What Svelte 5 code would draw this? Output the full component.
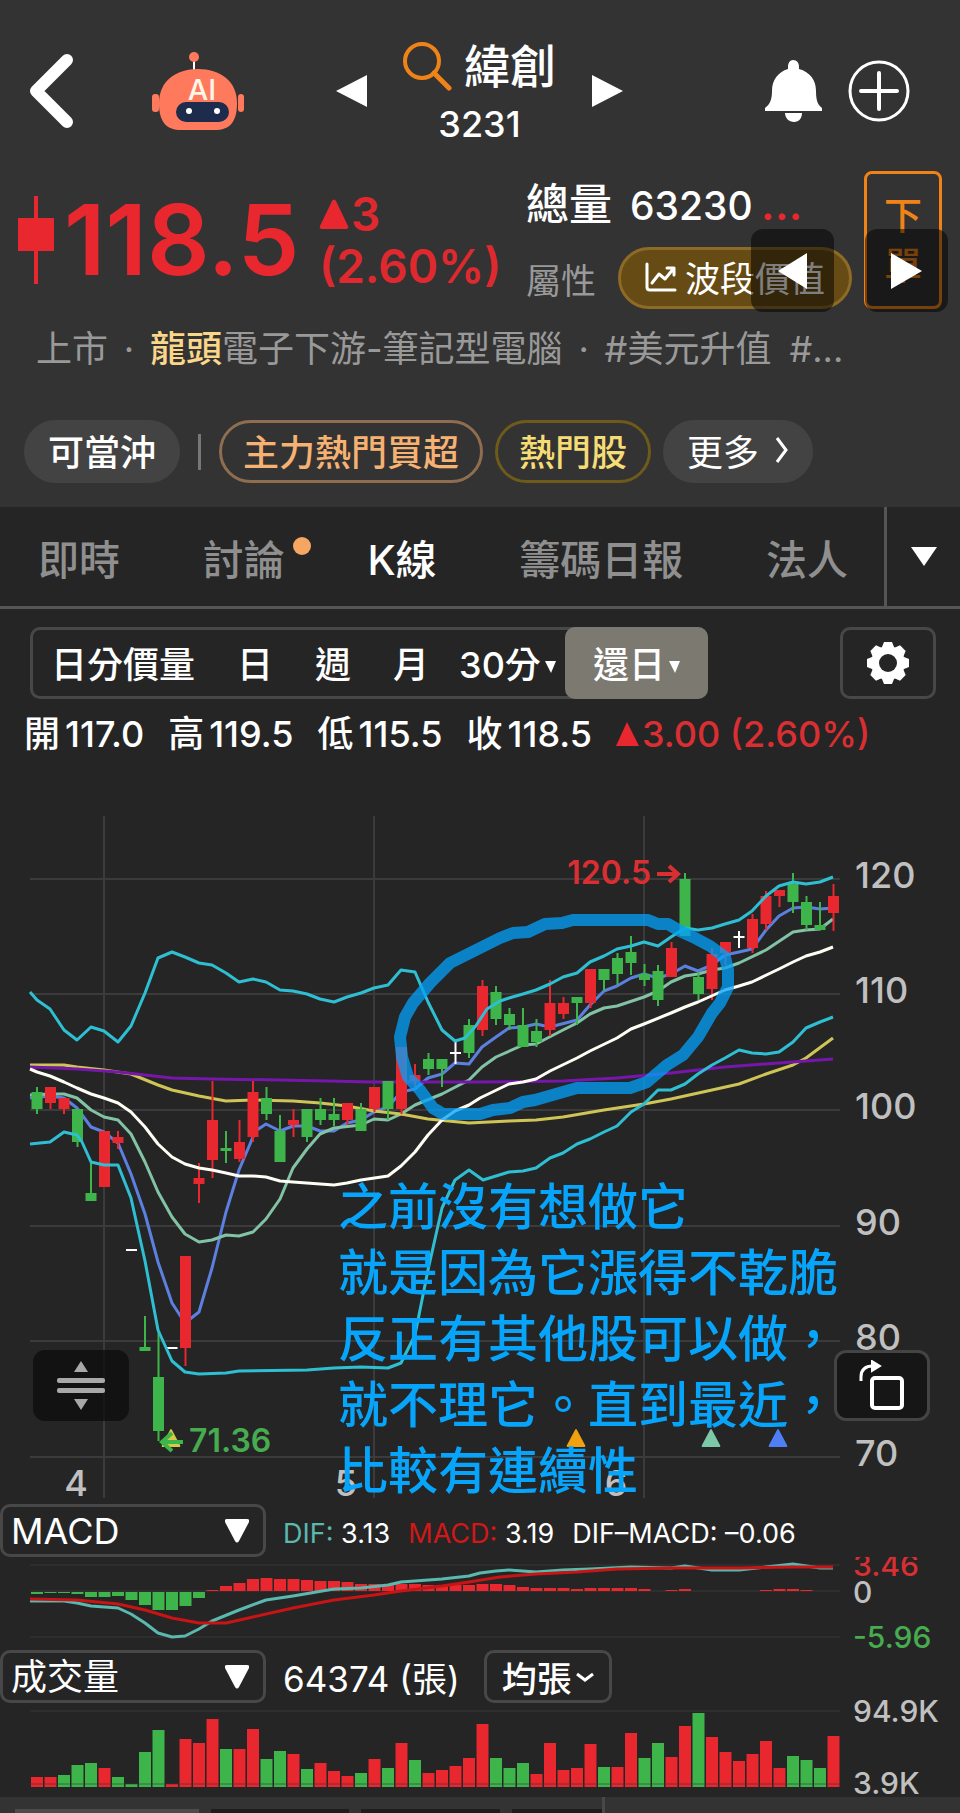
<script lang="ts">
  type Candle = [string, number, number, number, number];

  const X0 = 37;
  const STEP = 13.5;
  const colors: Record<string, string> = { r: '#e8272f', g: '#3db54a', w: '#ffffff' };

  // colour, high, body top, body bottom, low (chart units)
  const candles: Candle[] = [
    ['g', 307, 312, 329, 334], ['r', 307, 307, 323, 329], ['r', 318, 318, 329, 334], ['g', 329, 329, 362, 367],
    ['g', 382, 413, 421, 421], ['r', 351, 351, 407, 407], ['r', 351, 357, 363, 369], ['w', 469, 469, 471, 471],
    ['g', 536, 567, 571, 571], ['g', 552, 597, 651, 661], ['w', 567, 567, 569, 569], ['r', 476, 476, 568, 586],
    ['r', 383, 398, 404, 423], ['r', 301, 340, 380, 398], ['g', 351, 368, 371, 383], ['r', 340, 362, 379, 382],
    ['r', 301, 312, 357, 362], ['g', 307, 318, 334, 340], ['g', 335, 351, 382, 382], ['r', 329, 340, 345, 357],
    ['g', 329, 329, 357, 362], ['g', 318, 329, 340, 345], ['g', 318, 334, 340, 346], ['r', 323, 323, 340, 345],
    ['g', 323, 329, 351, 351], ['r', 307, 307, 329, 332], ['g', 301, 301, 329, 340], ['r', 267, 267, 329, 334],
    ['r', 284, 295, 301, 307], ['g', 273, 279, 289, 295], ['g', 279, 279, 289, 307], ['w', 262, 272, 274, 284],
    ['g', 239, 245, 273, 278], ['r', 200, 206, 250, 256], ['g', 206, 212, 239, 245], ['g', 228, 234, 245, 250],
    ['g', 228, 245, 267, 267], ['g', 239, 251, 262, 267], ['r', 200, 223, 250, 256], ['r', 217, 223, 234, 239],
    ['g', 217, 217, 223, 245], ['r', 189, 189, 223, 228], ['g', 189, 189, 200, 211], ['g', 173, 178, 194, 205],
    ['g', 156, 172, 183, 195], ['g', 184, 194, 200, 206], ['g', 185, 191, 220, 226], ['r', 162, 168, 197, 197],
    ['g', 93, 99, 156, 156], ['g', 192, 197, 214, 220], ['r', 168, 174, 209, 220], ['r', 162, 162, 173, 185],
    ['w', 151, 156, 158, 168], ['r', 134, 139, 168, 173], ['r', 111, 116, 144, 150], ['r', 110, 110, 116, 127],
    ['g', 93, 104, 122, 133], ['g', 116, 122, 145, 150], ['g', 122, 145, 150, 150], ['r', 104, 116, 133, 151]
  ];

  const lines = [
    { color: '#5b80e0', points: '30,318 50,316 64,318 77,328 91,347 104,352 118,363 131,394 145,434 158,482 172,523 185,543 199,532 212,488 226,432 239,390 253,357 257,350 266,344 280,351 293,346 307,346 320,351 334,351 347,343 361,340 374,332 388,327 401,312 415,309 428,298 442,294 455,283 469,284 482,267 496,257 509,248 523,247 536,244 550,247 577,240 590,225 604,211 617,206 631,198 644,194 658,198 671,194 685,186 698,191 712,185 725,175 739,172 752,169 766,150 779,136 793,128 806,127 820,129 833,128' },
    { color: '#82c3a6', points: '30,315 50,314 64,314 77,318 91,330 104,337 118,340 131,354 145,382 158,412 172,437 185,454 199,462 212,460 226,455 239,456 253,452 266,439 280,419 293,388 307,369 320,354 334,348 361,345 374,339 388,340 401,334 415,325 442,314 469,300 482,287 496,277 523,265 536,264 563,250 577,243 590,234 604,228 617,226 644,217 658,211 671,202 685,196 698,194 712,190 725,188 739,183 766,170 793,152 806,150 820,149 833,139' },
    { color: '#cfc557', points: '30,285 64,285 77,287 104,290 131,294 158,305 172,310 199,316 226,321 253,320 293,321 320,323 347,326 374,331 401,334 428,339 469,343 509,341 536,340 563,337 604,330 644,324 671,319 712,310 739,304 766,294 793,285 806,278 833,258' },
    { color: '#7716ab', points: '30,287 77,289 118,292 145,295 172,298 212,299 280,300 374,302 480,302 563,301 617,298 671,293 725,287 779,283 833,279' },
    { color: '#2fbfd3', points: '30,212 37,220 50,229 64,250 77,260 91,247 104,251 118,262 131,246 145,213 158,178 172,172 185,177 199,183 212,185 226,193 239,202 253,199 266,202 280,210 293,211 307,214 320,219 334,222 347,217 361,213 374,208 388,205 401,190 415,192 428,222 442,250 455,261 465,258 475,247 487,229 500,221 509,218 523,214 536,210 550,204 563,197 577,193 590,182 604,176 617,169 631,166 644,162 658,166 671,157 685,148 698,150 712,148 725,144 739,140 752,131 766,116 779,106 793,102 806,104 820,102 833,97' },
    { color: '#2fbfd3', points: '30,364 50,362 64,352 77,355 82,362 91,382 104,385 118,385 131,418 145,481 158,550 172,581 185,592 199,594 226,593 239,591 307,590 334,588 361,587 388,588 401,583 415,555 428,490 442,428 455,400 469,390 483,400 509,392 523,391 536,388 550,378 563,373 577,364 590,359 604,352 617,346 631,332 644,324 658,310 671,310 685,304 698,294 712,285 725,278 739,270 752,273 766,274 779,272 793,262 806,248 820,242 833,237' },
    { color: '#fffef5', points: '30,289 37,292 50,296 64,302 77,308 91,314 104,318 118,323 131,332 145,347 158,364 172,377 185,384 199,388 212,390 226,393 239,396 253,396 266,397 280,401 293,402 334,405 347,403 361,400 388,396 401,386 415,372 428,355 442,340 455,331 469,325 480,318 509,304 523,302 536,299 550,291 577,278 590,271 617,258 631,249 644,244 671,233 685,227 698,222 725,210 739,206 752,202 779,189 793,182 806,176 820,172 833,167' }
  ];

  const priceAxis = [
    { label: '120', y: 99 }, { label: '110', y: 214 }, { label: '100', y: 330 },
    { label: '90', y: 446 }, { label: '80', y: 561 }, { label: '70', y: 677 }
  ];
  const months = [
    { label: '4', x: 104 }, { label: '5', x: 374 }, { label: '6', x: 644 }
  ];
  const events = [
    { x: 171, color: '#d3cb45' }, { x: 576, color: '#f0a010' },
    { x: 711, color: '#7cc9a8' }, { x: 778, color: '#4f7ff5' }
  ];
  const note = ['之前沒有想做它', '就是因為它漲得不乾脆', '反正有其他股可以做，', '就不理它。直到最近，', '比較有連續性'];

  const histogram = [
    -2, -1, -1, -2, -5, -5, -4, -8, -13, -18, -18, -14, -6, 1, 5, 8, 12, 13, 12, 12,
    11, 10, 10, 9, 7, 7, 6, 7, 7, 6, 6, 6, 6, 7, 7, 6, 4, 3, 3, 3,
    2, 3, 3, 3, 3, 2, 0, 1, 2, 0, 0, 0, 0, 0, 1, 2, 2, 1, 0, 0
  ];
  const volume = [
    10, 10, 12, 22, 24, 19, 10, 3, 35, 57, 3, 48, 44, 68, 38, 38, 58, 28, 36, 33,
    18, 24, 16, 11, 14, 28, 19, 44, 27, 14, 17, 21, 29, 63, 29, 19, 24, 13, 44, 17,
    19, 43, 20, 20, 54, 29, 44, 30, 61, 74, 50, 35, 26, 33, 46, 19, 31, 27, 19, 51
  ];
  const volumeColors = 'rrgggrggggrrrrgrrggrgrrrgrgrgrrrrrgggrrrrrgrrggrrgrrrrrrgggr';

  const tabs = [
    { label: '即時' }, { label: '討論', dot: true }, { label: 'K線' }, { label: '籌碼日報' }, { label: '法人' }
  ];
  let activeTab = 'K線';

  const periods = [
    { label: '日分價量' }, { label: '日' }, { label: '週' }, { label: '月' },
    { label: '30分', menu: true }, { label: '還日', menu: true }
  ];
  let activePeriod = '還日';

  const ohlc = [['開', '117.0'], ['高', '119.5'], ['低', '115.5'], ['收', '118.5']];
</script>

<div class="app">
  <header>
    <div class="bar">
      <div class="bar-left">
        <button aria-label="返回">
          <svg width="44" height="76" viewBox="0 0 44 76"><path d="M38 7 7 38l31 31" fill="none" stroke="#fff" stroke-width="12" stroke-linecap="round" stroke-linejoin="round" /></svg>
        </button>
        <button aria-label="AI 助理">
          <svg width="92" height="80" viewBox="0 0 92 80">
            <path d="M42 8v12" stroke="#fff" stroke-width="2" />
            <circle cx="42" cy="6" r="5" fill="#ff7a5c" />
            <rect x="0" y="43" width="7" height="18" rx="3" fill="#ff7a5c" />
            <rect x="86" y="43" width="6" height="18" rx="3" fill="#ff7a5c" />
            <path d="M7 52C7 30 24 18 46 18s39 12 39 34c0 20-8 27-22 27H29C15 79 7 72 7 52z" fill="#ff7a5c" />
            <rect x="24" y="51" width="53" height="20" rx="10" fill="#1d2b4c" />
            <circle cx="37" cy="60" r="3" fill="#fff" />
            <circle cx="65" cy="60" r="3" fill="#fff" />
            <text x="50" y="49" text-anchor="middle" font-size="29" font-weight="500" fill="#fff6e8">AI</text>
          </svg>
        </button>
      </div>
      <div class="stock">
        <button aria-label="上一檔"><svg width="31" height="32" viewBox="0 0 31 32"><path d="M31 0v32L0 16z" fill="#fff" /></svg></button>
        <div class="title">
          <h1>
            <svg width="49" height="49" viewBox="0 0 49 49" fill="none" stroke="#ef8318"><circle cx="19" cy="19" r="17" stroke-width="4" /><path d="M31 31 46 46" stroke-width="5" stroke-linecap="round" /></svg>
            緯創
          </h1>
          <span class="code">3231</span>
        </div>
        <button aria-label="下一檔"><svg width="31" height="32" viewBox="0 0 31 32"><path d="M0 0v32L31 16z" fill="#fff" /></svg></button>
      </div>
      <div class="bar-right">
        <button aria-label="通知">
          <svg width="57" height="62" viewBox="0 0 57 62" fill="#fff">
            <path d="M28 0c4 0 6 3 6 7v2c11 3 17 11 17 22 0 10 2 14 6 17v3H0v-3c4-3 7-7 7-17C7 20 13 12 23 9V7c0-4 2-7 5-7z" />
            <path d="M20 53h17c0 5-3 9-8 9s-9-4-9-9z" />
          </svg>
        </button>
        <button aria-label="加入自選">
          <svg width="62" height="62" viewBox="0 0 62 62" fill="none" stroke="#fff"><circle cx="31" cy="31" r="29" stroke-width="3" /><path d="M13 31h36M31 13v36" stroke-width="4" stroke-linecap="round" /></svg>
        </button>
      </div>
    </div>

    <div class="quote">
      <svg width="36" height="88" viewBox="0 0 36 88" fill="#e8272f"><path d="M16 0h4v88h-4zM0 22h36v33H0z" /></svg>
      <strong class="price">118.5</strong>
      <div class="change">
        <span><svg width="30" height="30" viewBox="0 0 30 30"><path d="M13 2q2-3 4 0l12 25q1 3-2 3H3q-3 0-2-3z" fill="#e8272f" /></svg>3</span>
        <span>(2.60%)</span>
      </div>
      <div class="info">
        <div class="total"><span class="big">總量</span><span>63230<i>...</i></span></div>
        <div class="kind">
          <span>屬性</span>
          <button class="style-pill">
            <svg width="32" height="32" viewBox="0 0 32 32" fill="none" stroke="#fff" stroke-width="3" stroke-linecap="round" stroke-linejoin="round"><path d="M2 3v23q0 3 3 3h25M7 22l7-9 6 5 9-11M22 7h7v7" /></svg>
            波段價值
          </button>
        </div>
      </div>
      <button class="order">下單</button>
      <button class="float prev" aria-label="向左"><svg width="29" height="36" viewBox="0 0 29 36"><path d="M29 0v36L0 18z" fill="#fff" /></svg></button>
      <button class="float next" aria-label="向右"><svg width="31" height="36" viewBox="0 0 31 36"><path d="M0 0v36L31 18z" fill="#fff" /></svg></button>
    </div>

    <p class="tags">
      <span>上市</span><span class="sep">·</span><span><b>龍頭</b>電子下游-筆記型電腦</span><span class="sep">·</span><span>#美元升值</span><span class="last">#...</span>
    </p>

    <div class="chips">
      <button class="chip solid">可當沖</button>
      <i class="rule"></i>
      <button class="chip orange">主力熱門買超</button>
      <button class="chip yellow">熱門股</button>
      <button class="chip solid more">更多
        <svg width="14" height="28" viewBox="0 0 14 28"><path d="M2 2l9 12-9 12" fill="none" stroke="#fff" stroke-width="3" /></svg>
      </button>
    </div>
  </header>

  <nav>
    <div class="tabs">
      {#each tabs as tab}
        <button class="tab" class:active={activeTab === tab.label} on:click={() => (activeTab = tab.label)}>
          {tab.label}{#if tab.dot}<i class="dot"></i>{/if}
        </button>
      {/each}
    </div>
    <button class="all" aria-label="全部分頁"><svg width="26" height="19" viewBox="0 0 26 19"><path d="M0 0h26L13 19z" fill="#fff" /></svg></button>
  </nav>

  <div class="controls">
    <div class="periods">
      {#each periods as period}
        <button class:menu={period.menu} class:active={activePeriod === period.label} on:click={() => (activePeriod = period.label)}>
          {period.label}{#if period.menu}<svg width="11" height="12" viewBox="0 0 11 12"><path d="M0 0h11L6 12z" fill="#fff" /></svg>{/if}
        </button>
      {/each}
    </div>
    <button class="settings" aria-label="設定">
      <svg width="44" height="44" viewBox="-22 -22 44 44">
        {#each [0, 45, 90, 135] as angle}
          <path d="M-6-16-4-21H4L6-16V16L4 21H-4L-6 16z" fill="#fff" transform="rotate({angle})" />
        {/each}
        <circle r="17" fill="#fff" />
        <circle r="9" fill="#252525" />
      </svg>
    </button>
  </div>

  <div class="ohlc">
    {#each ohlc as [name, value]}
      <span>{name}<em>{value}</em></span>
    {/each}
    <span class="up"><svg width="23" height="24" viewBox="0 0 23 24"><path d="M11 0 23 24H0z" fill="#e8272f" /></svg>3.00 (2.60%)</span>
  </div>

  <div class="chart">
    <svg viewBox="0 0 960 720">
      <g stroke="#3b3b3b" stroke-width="2">
        {#each priceAxis as tick}<path d="M30 {tick.y}H840" />{/each}
        {#each months as month}<path d="M{month.x} 36V718" />{/each}
      </g>
      <g class="axis">
        {#each priceAxis as tick}<text x="855" y={tick.y + 9}>{tick.label}</text>{/each}
        {#each months as month}<text x={month.x - 28} y="716" text-anchor="middle">{month.label}</text>{/each}
      </g>
      <g fill="none" stroke-width="3" stroke-linejoin="round">
        {#each lines.slice(0, 4) as line}<polyline points={line.points} stroke={line.color} />{/each}
      </g>
      {#each candles as [color, high, top, bottom, low], i}
        <g fill={colors[color]}>
          <rect x={X0 + i * STEP - 1} y={high} width="2" height={low - high} />
          <rect x={X0 + i * STEP - 5.5} y={top} width="11" height={bottom - top} />
        </g>
      {/each}
      <g fill="none" stroke-width="3" stroke-linejoin="round">
        {#each lines.slice(4) as line}<polyline points={line.points} stroke={line.color} />{/each}
      </g>
      {#each events as event}
        <path d="M{event.x - 1} 650q1-2 2 0l8 15q1 2-1 2h-16q-2 0-1-2z" fill={event.color} />
      {/each}
      <g class="mark">
        <text x="651" y="104" text-anchor="end" fill="#d92f33">120.5</text>
        <path d="M657 94h20M669 86l9 8-9 8" stroke="#d92f33" />
        <text x="189" y="672" fill="#47ab50">71.36</text>
        <path d="M183 662h-20M172 653l-10 9 10 9" stroke="#3db54a" />
      </g>
      <path class="loop" d="M402 277 400 257 405 237 413 223 430 203 450 183 480 168 500 158 513 153 528 152 545 144 562 143 573 140H648L658 144H668L680 151 693 157 710 166 725 177 728 190V207L720 223 712 233 698 257 683 275 667 285 647 302 630 308H577L563 312 535 320 523 322 510 328 493 330 480 334H443L433 328 420 310 408 297z" />
      <g class="note">
        {#each note as row, i}<text x="338" y={445 + i * 66}>{row}</text>{/each}
      </g>
    </svg>
    <button class="resize" aria-label="調整高度">
      <svg width="48" height="49" viewBox="0 0 48 49" fill="#a8a8a8"><path d="M24 0 31 11H17zM24 49 31 38H17z" /><rect y="17" width="48" height="5" rx="2" /><rect y="27" width="48" height="5" rx="2" /></svg>
    </button>
    <button class="rotate" aria-label="旋轉畫面">
      <svg width="46" height="52" viewBox="0 0 46 52" fill="none" stroke="#fff"><rect x="13" y="18" width="30" height="30" rx="3" stroke-width="4" /><path d="M2 21v-4Q2 6 14 6" stroke-width="3" /><path d="M13 1 21 6 13 11z" fill="#fff" stroke-width="2" /></svg>
    </button>
  </div>

  <div class="indicator">
    <label class="picker">
      <select aria-label="副圖指標"><option>MACD</option><option>KD</option></select>
      <svg width="24" height="24" viewBox="0 0 24 24"><path d="M2 0h20q3 0 2 3L14 22q-2 3-4 0L0 3Q-1 0 2 0z" fill="#fff" /></svg>
    </label>
    <div class="values">
      <span><i class="dif">DIF:</i> 3.13</span><span><i class="macd">MACD:</i> 3.19</span><span>DIF–MACD: –0.06</span>
    </div>
  </div>
  <svg class="sub macd-chart" viewBox="0 0 960 93">
    <path d="M30 8H840M30 34H840M30 80H840" stroke="#383838" />
    {#each histogram as value, i}
      <rect x={X0 + i * STEP - 6} y={value > 0 ? 34 - value : 35} width="12" height={Math.abs(value)} fill={value > 0 ? colors.r : colors.g} />
    {/each}
    <g fill="none" stroke-width="3" stroke-linejoin="round">
      <polyline stroke="#5bb8ae" points="30,44 64,44 77,46 91,49 118,51 131,57 145,66 158,76 172,80 185,79 199,72 212,64 239,53 266,43 293,39 334,32 361,31 388,28 401,25 442,22 469,19 480,16 496,14 509,13 536,15 563,13 590,12 631,10 671,11 685,9 712,13 739,13 766,10 793,7 820,11 833,11" />
      <polyline stroke="#c81414" points="30,42 77,43 118,47 145,53 172,61 199,66 226,66 253,60 293,51 334,43 374,38 401,34 442,29 469,25 500,20 536,17 577,15 617,12 671,11 739,11 793,10 833,10" />
    </g>
    <text x="853" y="19" fill="#d92f33">3.46</text>
    <text x="853" y="46" fill="#c0c0c0">0</text>
    <text x="853" y="91" fill="#47ab50">-5.96</text>
  </svg>

  <div class="indicator">
    <label class="picker">
      <select aria-label="成交量指標"><option>成交量</option><option>RSI</option></select>
      <svg width="24" height="24" viewBox="0 0 24 24"><path d="M2 0h20q3 0 2 3L14 22q-2 3-4 0L0 3Q-1 0 2 0z" fill="#fff" /></svg>
    </label>
    <span class="amount">64374 (張)</span>
    <button class="average">均張<svg width="18" height="10" viewBox="0 0 18 10"><path d="M1 2l8 6 8-6" fill="none" stroke="#fff" stroke-width="3" /></svg></button>
  </div>
  <svg class="sub" viewBox="0 0 960 94">
    <path d="M30 8H840" stroke="#383838" />
    {#each volume as value, i}
      <rect x={X0 + i * STEP - 6} y={84 - value} width="12" height={value} fill={colors[volumeColors[i]]} />
    {/each}
    <path d="M30 81H840" stroke="#383838" opacity="0.6" />
    <text x="853" y="19" fill="#c0c0c0">94.9K</text>
    <text x="853" y="91" fill="#c0c0c0">3.9K</text>
  </svg>

  <footer>
    <div class="strip"><i class="on"></i><i></i><i></i><i></i></div>
  </footer>
</div>

<style>
  :global(body) {
    background: #252525;
  }
  .app {
    background: #252525;
    color: #fff;
    font-family: Inter, "Noto Sans CJK TC", sans-serif;
    font-size: 36px;
    overflow: hidden;
  }
  button {
    display: flex;
    align-items: center;
    justify-content: center;
    padding: 0;
    border: none;
    background: none;
    color: inherit;
    font: inherit;
    white-space: nowrap;
    cursor: pointer;
  }
  svg {
    display: block;
    flex: none;
  }
  i, em {
    font-style: normal;
  }

  header {
    background: #333;
    padding: 38px 0 24px;
  }
  .bar {
    display: grid;
    grid-template-columns: 1fr auto 1fr;
    align-items: center;
    padding: 0 50px 0 29px;
  }
  .bar-left, .bar-right, .stock {
    display: flex;
    align-items: center;
  }
  .bar-left { gap: 79px; }
  .bar-right { justify-content: flex-end; gap: 26px; }
  .stock { gap: 36px; margin-left: 20px; }
  .title {
    display: flex;
    flex-direction: column;
    align-items: center;
    gap: 10px;
  }
  h1 {
    display: flex;
    align-items: center;
    gap: 12px;
    margin: 0;
    font-size: 46px;
    font-weight: 500;
    line-height: 56px;
  }
  .code {
    font-weight: 500;
    line-height: 40px;
  }

  .quote {
    position: relative;
    display: grid;
    grid-template-columns: 36px 265fr 207fr 338fr 78px;
    align-items: center;
    margin-top: 27px;
    padding: 0 18px;
  }
  .price {
    padding-left: 10px;
    color: #e8272f;
    font-size: 98px;
    font-weight: 600;
    line-height: 100px;
  }
  .change {
    color: #e0292f;
    font-size: 46px;
    font-weight: 600;
    line-height: 52px;
  }
  .change span {
    display: flex;
    align-items: center;
    gap: 2px;
  }
  .info {
    display: flex;
    flex-direction: column;
    gap: 10px;
  }
  .total {
    display: flex;
    align-items: center;
    gap: 18px;
    height: 66px;
    font-size: 39px;
    font-weight: 500;
    line-height: 60px;
  }
  .big { font-size: 43px; }
  .total i { margin-left: 8px; color: #e8272f; font-size: 46px; }
  .kind {
    display: flex;
    align-items: center;
    gap: 22px;
    color: #999;
    font-size: 35px;
  }
  .style-pill {
    gap: 8px;
    height: 62px;
    padding: 0 24px 3px;
    border: 3px solid #8d6b26;
    border-radius: 31px;
    background: #674b14;
    color: #fff;
  }
  .order {
    align-self: stretch;
    border: 3px solid #ef8318;
    border-radius: 8px;
    color: #ef8318;
    font-size: 38px;
    font-weight: 500;
    line-height: 50px;
    white-space: normal;
    padding: 0 18px;
  }
  .float {
    position: absolute;
    bottom: -3px;
    width: 83px;
    height: 83px;
    border-radius: 12px;
    background: rgba(0, 0, 0, 0.5);
  }
  .prev { right: 126px; }
  .next { right: 12px; }

  .tags {
    display: flex;
    margin: 20px 0 0;
    padding: 0 36px;
    color: #999;
    line-height: 40px;
    white-space: nowrap;
  }
  .tags b { color: #fbd78a; font-weight: 500; }
  .sep { width: 42px; text-align: center; }
  .last { margin-left: 18px; }

  .chips {
    display: flex;
    align-items: center;
    gap: 12px;
    margin-top: 51px;
    padding: 0 24px;
  }
  .chip {
    height: 63px;
    padding: 0 21px 3px;
    border: 3px solid transparent;
    border-radius: 32px;
    font-weight: 500;
  }
  .solid { background: #434343; border-color: #434343; }
  .orange { border-color: #8f6e50; color: #f6b272; }
  .yellow { border-color: #6e5a1a; color: #f6dc75; }
  .more { gap: 16px; font-weight: 400; }
  .rule {
    width: 3px;
    height: 36px;
    margin: 0 6px;
    background: #777;
  }

  nav {
    display: flex;
    height: 99px;
    border-bottom: 3px solid #555;
  }
  .tabs {
    flex: 1;
    display: flex;
    justify-content: space-between;
    padding: 0 36px 0 38px;
  }
  .tab {
    position: relative;
    color: #8f8f8f;
    font-size: 41px;
    font-weight: 500;
  }
  .tab.active { color: #fff; }
  .dot {
    position: absolute;
    top: 30px;
    right: -26px;
    width: 18px;
    height: 18px;
    border-radius: 50%;
    background: #f4a662;
  }
  .all {
    width: 76px;
    border-left: 3px solid #555;
  }

  .controls {
    display: flex;
    justify-content: space-between;
    padding: 18px 24px 0 30px;
  }
  .periods {
    display: flex;
    height: 72px;
    border-radius: 10px;
    box-shadow: inset 0 0 0 3px #484848;
    font-weight: 500;
  }
  .periods button { padding: 0 21px 3px; }
  .periods .menu { gap: 4px; padding: 0 9px 3px; }
  .periods .menu svg { margin-top: 10px; }
  .periods .active {
    padding: 0 28px 3px;
    border-radius: 10px;
    background: #7b7970;
  }
  .settings {
    width: 96px;
    height: 72px;
    border: 3px solid #484848;
    border-radius: 10px;
  }

  .ohlc {
    display: flex;
    gap: 24px;
    margin-top: 15px;
    padding: 0 24px;
    font-weight: 500;
    line-height: 40px;
    white-space: nowrap;
  }
  .ohlc span { display: flex; align-items: center; }
  .ohlc em { margin-left: 5px; }
  .ohlc .up { gap: 3px; color: #d92f33; }

  .chart {
    position: relative;
    margin-top: 26px;
  }
  .chart > svg, .sub {
    width: 100%;
    height: auto;
    overflow: visible;
  }
  .axis {
    fill: #c0c0c0;
    font-size: 36px;
    font-weight: 500;
  }
  .mark {
    fill: none;
    stroke-width: 4;
    font-size: 32px;
    font-weight: 600;
  }
  .loop {
    fill: none;
    stroke: #02a0f8;
    stroke-width: 12;
    stroke-linejoin: round;
    opacity: 0.76;
  }
  .note {
    fill: #06a5fb;
    font-size: 50px;
    font-weight: 500;
  }
  .resize, .rotate {
    position: absolute;
    bottom: 79px;
    width: 96px;
    height: 71px;
    border-radius: 12px;
    background: rgba(10, 10, 10, 0.7);
  }
  .resize { left: 33px; }
  .rotate {
    right: 30px;
    border: 3px solid #444;
    background: #161616;
  }

  .indicator {
    display: flex;
    align-items: center;
    height: 53px;
  }
  .chart + .indicator { margin-top: 4px; }
  .picker {
    position: relative;
    margin-right: 17px;
  }
  .picker svg {
    position: absolute;
    top: 15px;
    right: 17px;
    pointer-events: none;
  }
  select {
    display: block;
    width: 266px;
    height: 53px;
    padding: 0 8px;
    border: 3px solid #484848;
    border-radius: 10px;
    appearance: none;
    background: transparent;
    color: #fff;
    font: inherit;
  }
  .values {
    display: flex;
    gap: 18px;
    padding-top: 5px;
    font-size: 27px;
    white-space: nowrap;
  }
  .dif { color: #5bb8ae; }
  .macd { color: #d01818; }
  .amount { font-size: 35px; white-space: nowrap; }
  .average {
    gap: 4px;
    height: 53px;
    margin-left: 24px;
    padding: 0 15px;
    border: 3px solid #484848;
    border-radius: 10px;
    font-size: 35px;
    font-weight: 500;
  }
  .sub {
    font-size: 30px;
    font-weight: 500;
  }
  .macd-chart { overflow: hidden; }

  footer {
    background: #333;
  }
  .strip {
    display: flex;
    gap: 12px;
    width: 63%;
    height: 16px;
    box-sizing: border-box;
    padding: 12px 0 0 15px;
    border-right: 3px solid #484848;
  }
  .strip i { flex: 138; background: #1d1d1d; }
  .strip .on { flex: 183; background: #4c4c4c; }
  .strip i:last-child { flex: 90; }
</style>
